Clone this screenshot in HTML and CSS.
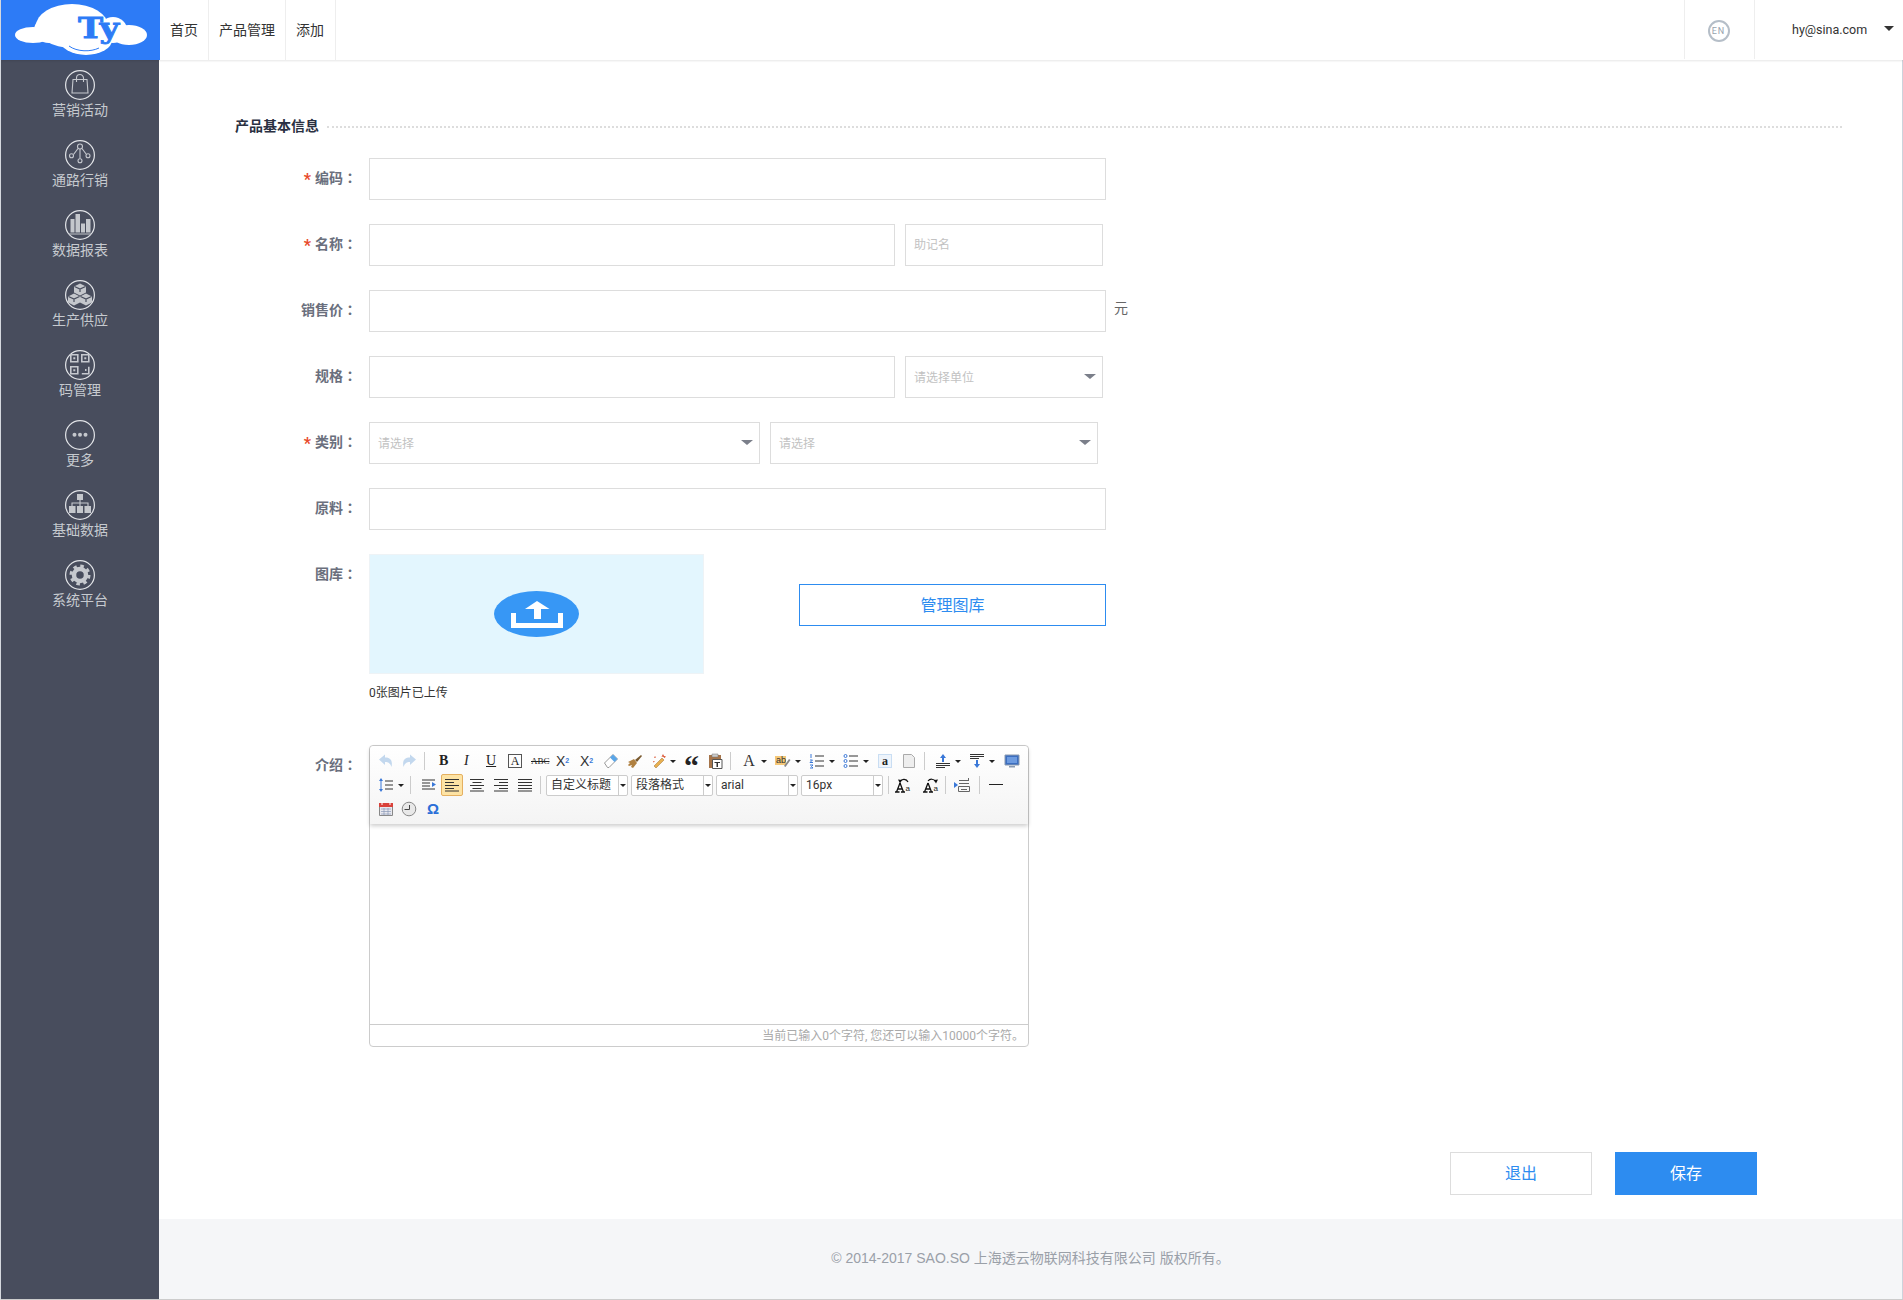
FILE: index.html
```html
<!DOCTYPE html>
<html lang="zh-CN">
<head>
    <meta charset="UTF-8">
    <meta name="viewport" content="width=device-width, initial-scale=1.0">
    <title>添加产品</title>
    <link rel="stylesheet" href="styles.css">
</head>
<body>
    <header class="topbar">
        <a class="logo">
            <svg width="159" height="60" viewBox="0 0 159 60">
                <g fill="#fff">
                    <ellipse cx="32" cy="35" rx="18" ry="8"/>
                    <ellipse cx="48" cy="30" rx="15" ry="13"/>
                    <ellipse cx="71" cy="26" rx="36" ry="22"/>
                    <ellipse cx="85" cy="40" rx="26" ry="15"/>
                    <ellipse cx="112" cy="30" rx="14" ry="13"/>
                    <ellipse cx="128" cy="35" rx="18" ry="10"/>
                </g>
                <path d="M68 46c8 6 22 6 30 2" fill="none" stroke="#2d7bf6" stroke-width="1"/>
                <text class="logo-ty" x="77" y="38" textLength="41" lengthAdjust="spacingAndGlyphs">Ty</text>
            </svg>
        </a>
        <nav class="topnav">
            <a>首页</a>
            <a>产品管理</a>
            <a>添加</a>
        </nav>
        <div class="topright">
            <div class="lang"><span>EN</span></div>
            <div class="user">hy@sina.com<i class="user-caret"></i></div>
        </div>
    </header>

    <div class="wrap">
        <aside class="sidebar">
            <a class="side-item">
                <svg class="side-icon" viewBox="0 0 30 30">
                    <circle class="ring" cx="15" cy="15" r="14.4"/>
                    <path class="ln" d="M8 9.5h14l1 13.5H7zM11.5 12V8a3.5 3.5 0 0 1 7 0v4"/>
                </svg>
                <span>营销活动</span>
            </a>
            <a class="side-item">
                <svg class="side-icon" viewBox="0 0 30 30">
                    <circle class="ring" cx="15" cy="15" r="14.4"/>
                    <path class="ln" d="M15 9v9.5M13 8.500L8.500 14.500M17 8.500l4.500 6"/>
                    <circle class="ln" cx="15" cy="6.500" r="2.500"/>
                    <circle class="ln" cx="6.500" cy="15.700" r="2"/>
                    <circle class="ln" cx="23" cy="15.700" r="2"/>
                    <circle class="ln" cx="15" cy="20.700" r="2"/>
                </svg>
                <span>通路行销</span>
            </a>
            <a class="side-item">
                <svg class="side-icon" viewBox="0 0 30 30">
                    <circle class="ring" cx="15" cy="15" r="14.400"/>
                    <path class="fl" d="M5.500 9h4v13.500h-4zM10.500 4h4.500v18.500h-4.500zM16 13.500h4v9h-4zM21 9h4.500v13.500H21zM4 23.500h22v1H4z"/>
                </svg>
                <span>数据报表</span>
            </a>
            <a class="side-item">
                <svg class="side-icon" viewBox="0 0 30 30">
                    <circle class="ring" cx="15" cy="15" r="14.400"/>
                    <path class="fl" d="M15 3.500l6 3v6l-6 3-6-3v-6zM9 13.500l6 3v6l-6 3-6-3v-6zM21 13.500l6 3v6l-6 3-6-3v-6z"/>
                    <path class="cut" d="M9.500 6.500l5.500 2.500 5.500-2.500M15 9v3M3.500 16.500L9 19l5.500-2.500M9 19v3M15.500 16.500L21 19l5.500-2.500M21 19v3"/>
                </svg>
                <span>生产供应</span>
            </a>
            <a class="side-item">
                <svg class="side-icon" viewBox="0 0 30 30">
                    <circle class="ring" cx="15" cy="15" r="14.400"/>
                    <path class="ln wide" d="M5.800 4.800h7v7h-7zM16.800 4.800h7v7h-7zM5.800 16.800h7v7h-7zM16.800 23.800h7v-7"/>
                    <path class="fl" d="M8.300 7.300h2v2h-2zM19.300 7.300h2v2h-2zM8.300 19.300h2v2h-2zM20 19h1.500v2H20z"/>
                </svg>
                <span>码管理</span>
            </a>
            <a class="side-item">
                <svg class="side-icon" viewBox="0 0 30 30">
                    <circle class="ring" cx="15" cy="15" r="14.400"/>
                    <circle class="fl" cx="9.500" cy="14.700" r="2"/>
                    <circle class="fl" cx="15" cy="14.700" r="2"/>
                    <circle class="fl" cx="20.500" cy="14.700" r="2"/>
                </svg>
                <span>更多</span>
            </a>
            <a class="side-item">
                <svg class="side-icon" viewBox="0 0 30 30">
                    <circle class="ring" cx="15" cy="15" r="14.400"/>
                    <path class="fl" d="M12 4h6v6h-6zM4 16h6.500v7H4zM12 16h6v7h-6zM19.500 16H26v7h-6.500z"/>
                    <path class="ln" d="M15 10v6M7 16v-3h16v3"/>
                </svg>
                <span>基础数据</span>
            </a>
            <a class="side-item">
                <svg class="side-icon" viewBox="0 0 30 30">
                    <circle class="ring" cx="15" cy="15" r="14.400"/>
                    <circle class="gear-teeth" cx="15" cy="15" r="9"/>
                    <circle class="gear-body" cx="15" cy="15" r="6"/>
                </svg>
                <span>系统平台</span>
            </a>
        </aside>

        <main class="main">
            <section class="section">
                <div class="section-head">
                    <h2>产品基本信息</h2>
                    <div class="dots"></div>
                </div>

                <div class="row">
                    <label class="lbl"><em>*</em>编码<span class="colon" lang="zh-Hant">：</span></label>
                    <input class="ipt w-full" type="text">
                </div>
                <div class="row">
                    <label class="lbl"><em>*</em>名称<span class="colon" lang="zh-Hant">：</span></label>
                    <input class="ipt w-main" type="text">
                    <input class="ipt w-side" type="text" placeholder="助记名">
                </div>
                <div class="row">
                    <label class="lbl">销售价<span class="colon" lang="zh-Hant">：</span></label>
                    <input class="ipt w-full" type="text">
                    <span class="unit">元</span>
                </div>
                <div class="row">
                    <label class="lbl">规格<span class="colon" lang="zh-Hant">：</span></label>
                    <input class="ipt w-main" type="text">
                    <div class="sel w-side">请选择单位<i></i></div>
                </div>
                <div class="row">
                    <label class="lbl"><em>*</em>类别<span class="colon" lang="zh-Hant">：</span></label>
                    <div class="sel w-cat1">请选择<i></i></div>
                    <div class="sel w-cat2">请选择<i></i></div>
                </div>
                <div class="row">
                    <label class="lbl">原料<span class="colon" lang="zh-Hant">：</span></label>
                    <input class="ipt w-full" type="text">
                </div>

                <div class="row row-gallery">
                    <label class="lbl">图库<span class="colon" lang="zh-Hant">：</span></label>
                    <div class="gallery">
                        <div class="upload">
                            <svg width="86" height="46" viewBox="0 0 86 46">
                                <ellipse cx="42.500" cy="23" rx="42.500" ry="23" fill="#3797f5"/>
                                <path d="M19.500 22v12.500h47V22" fill="none" stroke="#fff" stroke-width="5"/>
                                <path d="M43 10l12.500 8H47v10h-7V18h-9z" fill="#fff"/>
                            </svg>
                        </div>
                        <p class="upload-tip">0张图片已上传</p>
                    </div>
                    <a class="btn-manage">管理图库</a>
                </div>

                <div class="row row-editor">
                    <label class="lbl">介绍<span class="colon" lang="zh-Hant">：</span></label>
                    <div class="editor">
                        <div class="toolbar">
                            <div class="tb-row">
                                <span class="tb tb-first"><svg class="ic" viewBox="0 0 16 16"><path class="pale" d="M1 6.500L7 1.500v3c5 0 8 2.500 6.500 9.500-1-3.500-3-5-6.500-5v3z"/></svg></span>
                                <span class="tb"><svg class="ic" viewBox="0 0 16 16"><path class="pale" d="M15 6.500L9 1.500v3c-5 0-8 2.500-6.500 9.500 1-3.500 3-5 6.500-5v3z"/></svg></span>
                                <i class="sep"></i>
                                <span class="tb tx-b">B</span>
                                <span class="tb tx-i">I</span>
                                <span class="tb tx-u">U</span>
                                <span class="tb"><span class="tx-box">A</span></span>
                                <span class="tb tx-s">ABC</span>
                                <span class="tb tx-x">X<sup>2</sup></span>
                                <span class="tb tx-x">X<sub>2</sub></span>
                                <span class="tb"><svg class="ic" viewBox="0 0 16 16"><path d="M1.500 10L10 1.500l4.500 4.500L6 14.500H4.500z" fill="#fff" stroke="#999"/><path d="M7 4.500L10 1.500l4.500 4.500-3 3z" fill="#5aa6e8"/></svg></span>
                                <span class="tb"><svg class="ic" viewBox="0 0 16 16"><path d="M1 9l6-3 3 4-4 5-2-1 1-2-3 1-1-1 2-2z" fill="#b08040"/><path d="M8 7l6-5 1 1-5 6z" fill="#7a5a30"/></svg></span>
                                <span class="tb split-sm"><svg class="ic" viewBox="0 0 16 16"><path d="M3 13L11 5l2 2-8 8z" fill="#e8b050" stroke="#a07030" stroke-width=".5"/><path d="M12 1l1 2 2 .5-1.500 1.500L12 3.500 10.500 4zM4 3l1 1.500L3 5zM2 8l2 .5-1.500 1z" fill="#d9502e"/></svg><i class="arw"></i></span>
                                <span class="tb tx-q">“</span>
                                <span class="tb"><svg class="ic" viewBox="0 0 16 16"><path d="M2 2h12v13H2z" fill="#a5744a"/><path d="M5 1h6v3H5z" fill="#ccc" stroke="#777" stroke-width=".5"/><path d="M5.500 6.500h9.500v9H5.500z" fill="#fff" stroke="#555"/><path d="M7.500 9h5.500v1H11v4H9.500v-4h-2z" fill="#333"/></svg></span>
                                <i class="sep"></i>
                                <span class="tb split"><span class="tx-a">A</span><i class="arw"></i></span>
                                <span class="tb split"><svg class="ic" viewBox="0 0 16 16"><path d="M0 3h11v9H0z" fill="#f5c878"/><text class="tx-ab" x="1" y="10">ab</text><path d="M9 13l5-7 1.500 1-5 7z" fill="#888"/></svg><i class="arw"></i></span>
                                <span class="tb split"><svg class="ic" viewBox="0 0 16 16"><path class="st" d="M6 3h9M6 8h9M6 13h9"/><path class="blu-st" d="M2 1v4M1 7h2.500L1 9.500h3M1 12h3l-1.500 1.500L4 15H1"/></svg><i class="arw"></i></span>
                                <span class="tb split"><svg class="ic" viewBox="0 0 16 16"><path class="st" d="M6 3h9M6 8h9M6 13h9"/><circle class="blu-st" cx="2.500" cy="3" r="1.500"/><circle class="blu-st" cx="2.500" cy="8" r="1.500"/><circle class="blu-st" cx="2.500" cy="13" r="1.500"/></svg><i class="arw"></i></span>
                                <span class="tb"><svg class="ic" viewBox="0 0 16 16"><path d="M1.500 1.500h13v13h-13z" fill="#eef4fb" stroke="#9cc2ea" stroke-dasharray="1 1"/></svg><span class="tx-ao">a</span></span>
                                <span class="tb"><svg class="ic" viewBox="0 0 16 16"><path d="M2.500 1.500h8l3 3v10h-11z" fill="#eee" stroke="#aaa"/></svg></span>
                                <i class="sep"></i>
                                <span class="tb split"><svg class="ic" viewBox="0 0 16 16"><path class="st" d="M1 10.500h14M1 12.500h14M1 14.500h9"/><path d="M8 1l3 4H9v4H7V5H5z" fill="#3a78d8"/></svg><i class="arw"></i></span>
                                <span class="tb split"><svg class="ic" viewBox="0 0 16 16"><path class="st" d="M1 1.500h14M1 3.500h14M1 5.500h9"/><path d="M8 15l3-4H9V7H7v4H5z" fill="#3a78d8"/></svg><i class="arw"></i></span>
                                <span class="tb tb-last"><svg class="ic" viewBox="0 0 16 16"><path d="M1 2h14v10H1z" fill="#3d6fc0" stroke="#8a9ab0"/><path d="M3 4h10v6H3z" fill="#6d9be0"/><path d="M5 13h6v1.500H5z" fill="#8a9ab0"/></svg></span>
                            </div>
                            <div class="tb-row">
                                <span class="tb split tb-first"><svg class="ic" viewBox="0 0 16 16"><path class="st" d="M7 4h8M7 8h8M7 12h8"/><path d="M3 1l2 3H1zM3 15l2-3H1z" fill="#3a78d8"/><path d="M2.500 4h1v8h-1z" fill="#3a78d8"/></svg><i class="arw"></i></span>
                                <i class="sep"></i>
                                <span class="tb"><svg class="ic" viewBox="0 0 16 16"><path class="st" d="M1 3h13M1 6h8M1 9h8M1 12h13"/><path d="M11 5l4 2.500-4 2.500z" fill="#3a78d8"/></svg></span>
                                <span class="tb"><span class="active"><svg class="ic" viewBox="0 0 16 16"><path class="st" d="M1 2.500h14M1 5.500h9M1 8.500h14M1 11.500h9M1 14h14"/></svg></span></span>
                                <span class="tb"><svg class="ic" viewBox="0 0 16 16"><path class="st" d="M1 2.500h14M3.500 5.500h9M1 8.500h14M3.500 11.500h9M1 14h14"/></svg></span>
                                <span class="tb"><svg class="ic" viewBox="0 0 16 16"><path class="st" d="M1 2.500h14M6 5.500h9M1 8.500h14M6 11.500h9M1 14h14"/></svg></span>
                                <span class="tb"><svg class="ic" viewBox="0 0 16 16"><path class="st" d="M1 2.500h14M1 5.500h14M1 8.500h14M1 11.500h14M1 14h14"/></svg></span>
                                <i class="sep sep-sel"></i>
                                <div class="combo">自定义标题<b></b></div>
                                <div class="combo">段落格式<b></b></div>
                                <div class="combo">arial<b></b></div>
                                <div class="combo">16px<b></b></div>
                                <i class="sep sep-combo"></i>
                                <span class="tb tb-m"><svg class="ic" viewBox="0 0 16 16"><path d="M0 15h4.500M6 15h4M5 6L1.500 15M5 6l3.500 9M3 12h4" fill="none" stroke="#111" stroke-width="1.300"/><path d="M5 4.500a4.500 4.500 0 0 1 8 .5" fill="none" stroke="#111" stroke-width="1.200"/><path d="M3 2.500l4 .5-2 3.500z" fill="#111"/><text class="tx-sm" x="10.500" y="14">a</text></svg></span>
                                <span class="tb tb-m"><svg class="ic" viewBox="0 0 16 16"><path d="M0 15h4.500M6 15h4M5 6L1.500 15M5 6l3.500 9M3 12h4" fill="none" stroke="#111" stroke-width="1.300"/><path d="M5 4a4.500 4.500 0 0 1 7.500 .5" fill="none" stroke="#111" stroke-width="1.200"/><path d="M15 2.500l-4 .5 2 3.500z" fill="#111"/><text class="tx-sm" x="10.500" y="14">a</text></svg></span>
                                <i class="sep sep-tight"></i>
                                <span class="tb tb-l"><svg class="ic" viewBox="0 0 16 16"><path d="M5 3.500h10M14.500 1v3M5 6.500h10" fill="none" stroke="#666"/><path d="M4.500 9.500h11v5h-11z" fill="none" stroke="#666"/><path d="M7 12.500h6" stroke="#666"/><path d="M0 5l4 3-4 3z" fill="#3a78d8"/></svg></span>
                                <i class="sep sep-tight"></i>
                                <span class="tb tb-l"><svg class="ic" viewBox="0 0 16 16"><path d="M1 7.500h14" stroke="#222"/></svg></span>
                            </div>
                            <div class="tb-row">
                                <span class="tb tb-first"><svg class="ic" viewBox="0 0 16 16"><path d="M1.500 3.500h13v11h-13z" fill="#e8e8ee" stroke="#888"/><path d="M1 2h14v4H1z" fill="#d9413a"/><path d="M4 1v3M12 1v3" stroke="#fff"/><path d="M3 8h10M3 10.500h10M3 13h10M6 7v7M10 7v7" stroke="#8a9ab8" stroke-width=".7"/></svg></span>
                                <span class="tb"><svg class="ic" viewBox="0 0 16 16"><circle cx="8" cy="8" r="6.800" fill="#e8e8e8" stroke="#888"/><path d="M8.500 4v4.500H3.500" fill="none" stroke="#444"/></svg></span>
                                <span class="tb tx-o">Ω</span>
                            </div>
                        </div>
                        <div class="edit-area"></div>
                        <div class="edit-foot">当前已输入0个字符, 您还可以输入10000个字符。</div>
                    </div>
                </div>
            </section>

            <div class="actions">
                <a class="btn btn-line">退出</a>
                <a class="btn btn-blue">保存</a>
            </div>

            <footer class="copy">© 2014-2017 SAO.SO 上海透云物联网科技有限公司 版权所有。</footer>
        </main>
    </div>
</body>
</html>
```

FILE: styles.css
```css
*{
    padding: 0;
    margin: 0;
    box-sizing: border-box;
}
body{
    width: 1903px;
    height: 1300px;
    overflow: hidden;
    background: #fff;
    border-left: 1px solid #d5d8de;
    font-family: Roboto, "Noto Sans CJK SC", sans-serif;
    font-size: 14px;
    color: #333;
}
a{
    text-decoration: none;
}

/* top bar */
.topbar{
    display: flex;
    height: 60px;
    background: #fff;
    box-shadow: 0 1px 2px rgba(0,0,0,.1);
    position: relative;
}
.logo{
    display: block;
    width: 159px;
    height: 60px;
    background: #2d7bf6;
}
.logo-ty{
    font-family: "DejaVu Serif", serif;
    font-weight: bold;
    font-size: 27px;
    fill: #2d7bf6;
    stroke: #2d7bf6;
    stroke-width: .8;
}
.topnav{
    display: flex;
    flex: 1;
}
.topnav a{
    padding: 0 10px;
    line-height: 60px;
    border-right: 1px solid #eee;
    color: #333;
}
.topnav a:last-child{
    padding-right: 11px;
}
.topright{
    display: flex;
    height: 59px;
}
.lang{
    width: 71px;
    padding: 2px 2px 0 0;
    border-left: 1px solid #eee;
    border-right: 1px solid #eee;
    display: flex;
    align-items: center;
    justify-content: center;
}
.lang span{
    width: 22px;
    height: 22px;
    border: 2px solid #b5bec8;
    border-radius: 50%;
    font-size: 9px;
    line-height: 18px;
    text-align: center;
    color: #98a3ae;
    letter-spacing: 1px;
}
.user{
    width: 148px;
    padding-left: 37px;
    line-height: 59px;
    font-size: 12.5px;
    position: relative;
}
.user-caret{
    position: absolute;
    right: 9px;
    top: 26px;
    border-style: solid;
    border-width: 5px 5px 0;
    border-color: #333 transparent transparent;
}

/* layout */
.wrap{
    display: flex;
    height: 1240px;
    border-bottom: 1px solid #ccc;
}
.sidebar{
    width: 158px;
    background: #484d5d;
    flex-shrink: 0;
}
.side-item{
    display: flex;
    flex-direction: column;
    align-items: center;
    height: 70px;
    padding-top: 10px;
    color: #c6cacf;
    line-height: 20px;
}
.side-icon{
    width: 30px;
    height: 30px;
}
.ring{
    fill: none;
    stroke: #e2e4e8;
    stroke-width: 1.2;
}
.ln{
    fill: none;
    stroke: #c6c9cf;
    stroke-width: 1.1;
}
.ln.wide{
    stroke-width: 1.6;
}
.fl{
    fill: #c4c7cc;
}
.cut{
    fill: none;
    stroke: #484d5d;
    stroke-width: 1.2;
}
.gear-teeth{
    fill: none;
    stroke: #c6c9ce;
    stroke-width: 3;
    stroke-dasharray: 3.5 3.57;
}
.gear-body{
    fill: none;
    stroke: #c6c9ce;
    stroke-width: 4.5;
}
.main{
    flex: 1;
    display: flex;
    flex-direction: column;
    border-right: 1px solid #cdd3dc;
    min-width: 0;
}

/* form */
.section{
    padding: 56px 60px 0 76px;
}
.section-head{
    display: flex;
    align-items: center;
    height: 20px;
    margin-bottom: 22px;
}
.section-head h2{
    font-size: 14px;
    font-weight: bold;
    color: #2a3042;
    line-height: 20px;
}
.dots{
    flex: 1;
    margin-left: 8px;
    margin-top: 2px;
    border-top: 2px dotted #ddd;
}
.row{
    display: flex;
    height: 42px;
    margin-bottom: 24px;
}
.lbl{
    width: 122px;
    margin-right: 12px;
    line-height: 39px;
    font-weight: bold;
    text-align: right;
    color: #6a6f7d;
}
.lbl em{
    font-style: normal;
    color: #e8492a;
    margin-right: 4px;
    font-size: 16px;
    line-height: 1;
    vertical-align: -2px;
}
.colon{
    font-family: "Noto Sans CJK TC", sans-serif;
}
.ipt,.sel{
    height: 42px;
    border: 1px solid #ddd;
    background: #fff;
    padding: 0 8px;
    font-size: 12px;
    font-family: inherit;
    outline: none;
}
.ipt::placeholder{
    color: #c2c2c2;
}
.sel{
    line-height: 43px;
    color: #c2c2c2;
    position: relative;
}
.sel i{
    position: absolute;
    right: 6px;
    top: 17px;
    border-style: solid;
    border-width: 5px 6px 0;
    border-color: #7b7f8a transparent transparent;
}
.w-full{
    width: 737px;
}
.w-main{
    width: 526px;
}
.w-side{
    width: 198px;
    margin-left: 10px;
}
.w-cat1{
    width: 391px;
}
.w-cat2{
    width: 328px;
    margin-left: 10px;
}
.unit{
    margin-left: 8px;
    line-height: 36px;
    color: #666;
}

/* gallery */
.row-gallery{
    height: 148px;
    margin-bottom: 43px;
    align-items: flex-start;
}
.gallery{
    width: 335px;
}
.upload{
    height: 120px;
    background: #e3f6fe;
    border: 1px solid #eef3f6;
    display: flex;
    align-items: center;
    justify-content: center;
}
.upload-tip{
    margin-top: 9px;
    font-size: 12px;
    line-height: 20px;
}
.btn-manage{
    display: block;
    width: 307px;
    height: 42px;
    margin: 30px 0 0 95px;
    border: 1px solid #2d8cf0;
    color: #2d8cf0;
    font-size: 16px;
    line-height: 41px;
    text-align: center;
}

/* editor */
.row-editor{
    height: 302px;
    margin-bottom: 0;
}
.editor{
    width: 660px;
    height: 302px;
    border: 1px solid #ccc;
    border-radius: 4px;
    display: flex;
    flex-direction: column;
}
.toolbar{
    height: 78px;
    padding: 3px 0 3px 3px;
    background: linear-gradient(#fff, #f4f4f4);
    box-shadow: 0 2px 4px rgba(0,0,0,.2);
    position: relative;
    border-radius: 4px 4px 0 0;
}
.tb-row{
    display: flex;
    align-items: center;
    height: 24px;
}
.tb{
    display: flex;
    align-items: center;
    justify-content: flex-start;
    width: 24px;
    height: 24px;
    padding-left: 4px;
    position: relative;
    color: #222;
    font-family: "Liberation Serif", serif;
    font-size: 13px;
    line-height: 24px;
    flex-shrink: 0;
}
.tb-first{
    margin-left: 1px;
    margin-right: -1px;
}
.split{
    width: 34px;
}
.split-sm{
    width: 32px;
}
.tb-last{
    margin-left: 1px;
}
.tb-m{
    width: 28px;
    padding-left: 6px;
}
.tb-l{
    width: 33px;
    padding-left: 8px;
}
.ic{
    width: 16px;
    height: 16px;
    flex-shrink: 0;
}
.pale{
    fill: #c3d8ee;
}
.st{
    fill: none;
    stroke: #333;
    stroke-width: 1;
}
.blu-st{
    fill: none;
    stroke: #3a78d8;
    stroke-width: 1;
}
.arw{
    border-style: solid;
    border-width: 3px 3px 0;
    border-color: #222 transparent transparent;
    margin-left: 4px;
}
.split-sm .arw{
    margin-left: 3px;
}
.sep{
    width: 1px;
    height: 18px;
    background: #ccc;
    margin: 0 6px 0 3px;
    flex-shrink: 0;
}
.sep-sel{
    margin-right: 5px;
}
.sep-combo{
    margin: 0 0 0 5px;
}
.sep-tight{
    margin: 0;
}
.tx-b{
    font-weight: bold;
    font-size: 14px;
    padding-left: 8px;
}
.tx-i{
    font-style: italic;
    font-size: 14px;
    padding-left: 9px;
}
.tx-u{
    text-decoration: underline;
    font-size: 14px;
    padding-left: 7px;
}
.tx-box{
    display: block;
    width: 14px;
    height: 14px;
    border: 1px solid #555;
    font-size: 12px;
    line-height: 12px;
    text-align: center;
    margin-left: 1px;
}
.tx-s{
    text-decoration: line-through;
    font-size: 9px;
    padding-left: 4px;
}
.tx-x{
    font-family: "Liberation Sans", sans-serif;
    font-size: 14px;
    padding-left: 5px;
    color: #333;
}
.tx-x sup,.tx-x sub{
    font-size: 7px;
    font-weight: bold;
    color: #3a78d8;
    line-height: 0;
}
.tx-q{
    font-size: 30px;
    font-weight: bold;
    line-height: 24px;
    padding: 9px 0 0 5px;
}
.tx-a{
    font-size: 16px;
    width: 16px;
    text-align: center;
    color: #333;
}
.tx-ab{
    font-family: "Liberation Sans", sans-serif;
    font-size: 9px;
    fill: #333;
}
.tx-ao{
    position: absolute;
    left: 9px;
    top: 0;
    font-weight: bold;
    font-size: 12px;
}
.tx-sm{
    font-family: "Liberation Sans", sans-serif;
    font-size: 8px;
    fill: #222;
}
.tx-o{
    font-family: "Liberation Sans", sans-serif;
    font-size: 15px;
    font-weight: bold;
    color: #2b6fd8;
    padding-left: 6px;
}
.active{
    display: flex;
    align-items: center;
    justify-content: center;
    width: 22px;
    height: 22px;
    margin-left: -4px;
    background: #fde3a4;
    border: 1px solid #e5b060;
    border-radius: 2px;
}
.combo{
    width: 82px;
    height: 21px;
    margin-right: 3px;
    border: 1px solid #ccc;
    border-radius: 2px;
    background: #fff;
    padding-left: 4px;
    font-size: 12px;
    line-height: 19px;
    color: #333;
    position: relative;
    flex-shrink: 0;
}
.combo:nth-of-type(4){
    margin-right: 0;
}
.combo b{
    position: absolute;
    right: 0;
    top: 0;
    width: 9px;
    height: 19px;
    border-left: 1px solid #ccc;
}
.combo b::after{
    content: "";
    position: absolute;
    left: 1px;
    top: 8px;
    border-style: solid;
    border-width: 3px 3px 0;
    border-color: #222 transparent transparent;
}
.edit-area{
    flex: 1;
    border-bottom: 1px solid #ccc;
}
.edit-foot{
    height: 21px;
    padding-right: 4px;
    text-align: right;
    font-size: 12px;
    line-height: 22px;
    color: #aaa;
}

/* bottom */
.actions{
    display: flex;
    justify-content: flex-end;
    gap: 23px;
    margin-top: 105px;
    padding-right: 145px;
}
.btn{
    display: block;
    width: 142px;
    height: 43px;
    font-size: 16px;
    line-height: 41px;
    text-align: center;
}
.btn-line{
    border: 1px solid #ddd;
    color: #2d8cf0;
}
.btn-blue{
    background: #2d8cf0;
    border: 1px solid #2d8cf0;
    color: #fff;
}
.copy{
    margin-top: auto;
    height: 80px;
    background: #f5f6f8;
    color: #9aa0a8;
    font-family: "Liberation Sans", "Noto Sans CJK SC", sans-serif;
    text-align: center;
    line-height: 79px;
}
```
